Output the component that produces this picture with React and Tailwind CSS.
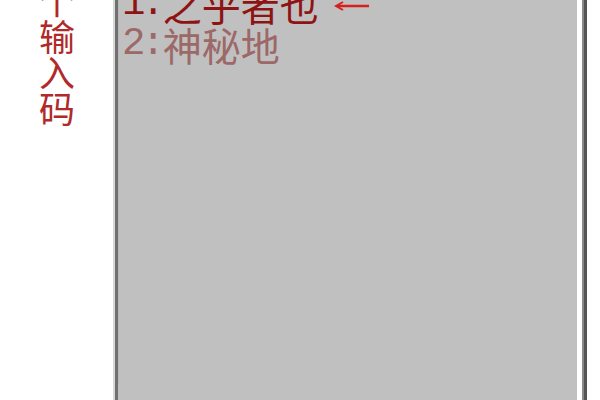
export default function App() {
  const cjk = { fontFamily: "'Noto Sans CJK SC', sans-serif" };
  return (
    <div className="flex h-[400px] w-[600px] overflow-hidden bg-white" style={cjk}>
      {/* left vertical hint text */}
      <div className="w-[113px] shrink-0">
        <div className="-mt-[19px] ml-[39px] flex w-[37px] flex-col text-[36px] leading-[36px] text-[#b02a2a]">
          <span>个</span>
          <span>输</span>
          <span>入</span>
          <span>码</span>
        </div>
      </div>

      {/* candidate panel */}
      <div className="flex shrink-0 border-l-2 border-[#d8d8d8]">
        <div className="h-full w-[462px] border-l-[3px] border-[#707070] bg-[#c0c0c0]">
          <div className="h-full border-l border-[#b8b8b8] pl-[3px]">
            <div className="-mt-[16px] text-[39px] leading-[40px]">
              <div className="flex items-center text-[#8e1414]">
                <span className="font-['Liberation_Mono'] tracking-[-4px]">1:</span>
                <span className="ml-[2px]">之乎者也</span>
                <svg width="38" height="12" viewBox="0 0 38 12" className="ml-[14px] mt-[4px]">
                  <path d="M4 6 H36" stroke="#d81e1e" strokeWidth="2.5" />
                  <path d="M10 2 L3 6 L10 10" stroke="#d81e1e" strokeWidth="2" fill="none" />
                </svg>
              </div>
              <div className="flex text-[#9c6868]">
                <span className="font-['Liberation_Mono'] tracking-[-4px]">2:</span>
                <span className="ml-[2px]">神秘地</span>
              </div>
            </div>
          </div>
        </div>
      </div>

      {/* right frame edge */}
      <div className="ml-[5px] flex h-full">
        <div className="w-[2px] bg-[#8a8a8a]" />
        <div className="w-[3px] bg-[#555555]" />
      </div>
    </div>
  );
}
